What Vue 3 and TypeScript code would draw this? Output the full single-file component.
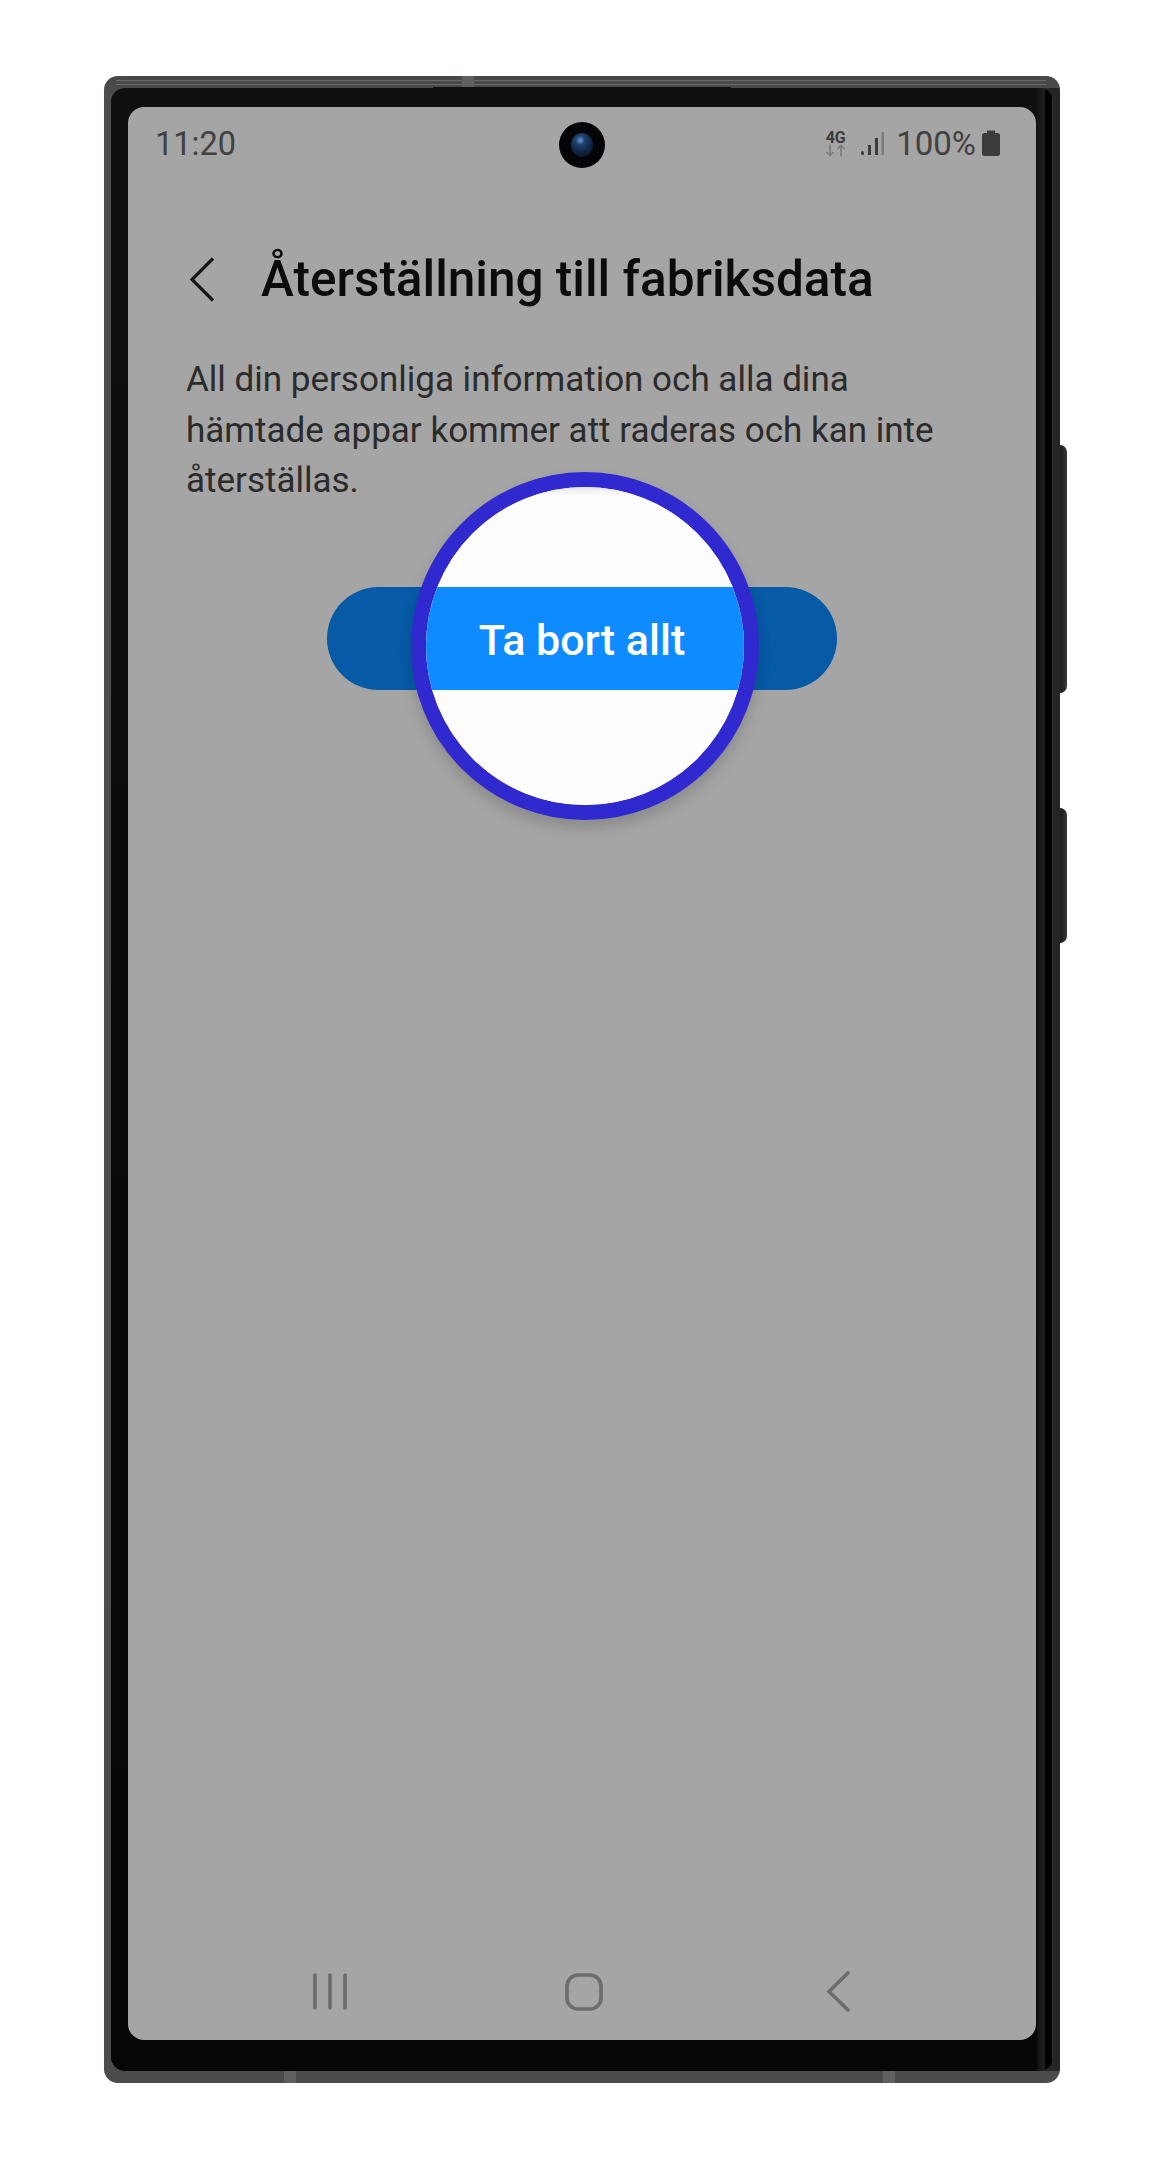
<script setup lang="ts">
const lines: string[] = [
  'All din personliga information och alla dina',
  'hämtade appar kommer att raderas och kan inte',
  'återställas.',
]
</script>

<template>
  <div class="page">
    <div class="device">
      <span class="side-key key-power"></span>
      <span class="side-key key-volume"></span>
      <div class="shell">
        <span class="band-line line-a"></span>
        <span class="band-line line-b"></span>
        <span class="tick tick-top"></span>
        <span class="tick tick-left"></span>
        <span class="tick tick-right"></span>
        <div class="bezel">
          <span class="notch"></span>
          <div class="screen">
            <span class="camera"><span class="lens-glass"></span></span>

            <div class="status">
              <span class="time">11:20</span>
              <div class="status-right">
                <div class="net">
                  <span class="net-label">4G</span>
                  <svg class="net-arrows" width="21" height="13" viewBox="0 0 21 13">
                    <path d="M5 0.5V11.5M1.5 8L5 11.5L8.5 8" />
                    <path d="M16 12.5V1.5M12.5 5L16 1.5L19.5 5" />
                  </svg>
                </div>
                <svg class="signal" width="23" height="24" viewBox="0 0 23 24">
                  <rect x="0" y="19" width="3" height="4" rx="1.5" fill="#3c3c3c" />
                  <rect x="7" y="13" width="3" height="10" fill="#3c3c3c" />
                  <rect x="14" y="6" width="3" height="17" fill="#3c3c3c" />
                  <rect x="20.5" y="0" width="2.5" height="23" fill="#7c7c7c" />
                </svg>
                <span class="percent">100%</span>
                <svg class="battery" width="18" height="26" viewBox="0 0 18 26">
                  <path d="M5 0.5H13V3H15.5Q18 3 18 5.5V23.5Q18 26 15.5 26H2.5Q0 26 0 23.5V5.5Q0 3 2.5 3H5Z" fill="#3c3c3c" />
                </svg>
              </div>
            </div>

            <div class="header">
              <svg class="back" width="25" height="45" viewBox="0 0 25 45">
                <path d="M23 1.5L2 22.5L23 43.5" />
              </svg>
              <h1 class="title">Återställning till fabriksdata</h1>
            </div>

            <div class="body">
              <p v-for="line in lines" :key="line" class="body-line">{{ line }}</p>
            </div>

            <div class="action">
              <div class="pill"></div>
            </div>

            <div class="nav">
              <svg width="36" height="38" viewBox="0 0 36 38" class="nav-icon">
                <path d="M3 2V35M18 2V35M33 2V35" />
              </svg>
              <svg width="38" height="38" viewBox="0 0 38 38" class="nav-icon">
                <rect x="2" y="2" width="34" height="34" rx="11" />
              </svg>
              <svg width="24" height="42" viewBox="0 0 24 42" class="nav-icon">
                <path d="M22 2L3 20.5L22 39" />
              </svg>
            </div>

            <div class="magnifier">
              <div class="mag-white top"></div>
              <div class="mag-band">Ta bort allt</div>
              <div class="mag-white"></div>
            </div>
          </div>
        </div>
      </div>
    </div>
  </div>
</template>

<style>
html, body { margin: 0; background: #ffffff; }
</style>

<style scoped>
.page {
  width: 1170px;
  height: 2160px;
  padding: 76px 0 0 104px;
  box-sizing: border-box;
  background: #ffffff;
  overflow: hidden;
  font-family: Roboto, "Liberation Sans", sans-serif;
}
.device { position: relative; width: 956px; height: 2007px; }
.side-key {
  position: absolute;
  left: 954px;
  width: 9px;
  background: linear-gradient(90deg, #161716 0%, #262826 60%, #3a3c3a 100%);
  border-radius: 0 7px 7px 0;
}
.key-power { top: 369px; height: 248px; }
.key-volume { top: 732px; height: 135px; }
.shell {
  position: relative;
  height: 100%;
  box-sizing: border-box;
  padding: 12px 7px;
  border-radius: 14px;
  background:
    linear-gradient(#484a48, #484a48) top / 100% 12px no-repeat,
    linear-gradient(#4a4c49, #4a4c49) bottom / 100% 12px no-repeat,
    linear-gradient(90deg, #4a4d4a 0%, #4a4d4a 1%, #242624 99%, #242624 100%);
}
.band-line { position: absolute; left: 12px; right: 14px; height: 1px; background: #858785; opacity: .55; }
.line-a { top: 4px; }
.line-b { top: 8px; }
.tick { position: absolute; width: 12px; height: 12px; background: #5e615e; }
.tick-top { top: 0; left: 358px; }
.tick-left { bottom: 0; left: 180px; }
.tick-right { bottom: 0; left: 779px; }
.bezel {
  position: relative;
  height: 100%;
  box-sizing: border-box;
  padding: 19px 17px 31px;
  border-radius: 14px;
  background:
    linear-gradient(90deg, transparent 0, transparent 925px, #161616 928px, #212121 933px, #000 935px, #000 941px, #6a6a6a 942px),
    linear-gradient(180deg, #101010 0%, #060606 100%);
}
.notch {
  position: absolute;
  top: -1px;
  left: 322px;
  width: 298px;
  height: 4px;
  background: #101010;
}
.screen {
  position: relative;
  height: 100%;
  box-sizing: border-box;
  display: flex;
  flex-direction: column;
  border-radius: 16px;
  background: #a5a5a5;
}
.camera {
  position: absolute;
  left: 431px;
  top: 15px;
  width: 46px;
  height: 46px;
  border-radius: 50%;
  background: #040407;
  display: flex;
  align-items: center;
  justify-content: center;
}
.lens-glass {
  width: 22px;
  height: 24px;
  border-radius: 50%;
  background: radial-gradient(circle at 42% 30%, #6d9ad0 0%, #1f426f 22%, #0f2744 55%, #060c18 100%);
}
.status {
  display: flex;
  align-items: center;
  justify-content: space-between;
  height: 50px;
  padding: 12px 36px 0 27px;
  color: #414141;
}
.time { font-size: 32.5px; line-height: 36px; letter-spacing: 0; }
.status-right { display: flex; align-items: center; }
.net { display: flex; flex-direction: column; align-items: center; width: 21px; margin-right: 15px; }
.net-label { font-size: 16px; font-weight: 700; line-height: 13px; color: #3c3c3c; }
.net-arrows { fill: none; stroke: #7c7c7c; stroke-width: 1.6; }
.signal { margin-right: 12px; }
.percent { font-size: 33px; line-height: 36px; margin-right: 6px; }
.battery { margin-top: -2px; }
.header {
  display: flex;
  align-items: center;
  margin-top: 82px;
  padding-left: 62px;
}
.back { fill: none; stroke: #161616; stroke-width: 3.2; }
.title {
  margin: 0 0 0 46px;
  font-size: 49.5px;
  line-height: 56px;
  font-weight: 500;
  color: #0b0b0b;
  white-space: nowrap;
}
.body { margin-top: 48px; padding-left: 58px; }
.body-line {
  margin: 0;
  font-size: 35px;
  line-height: 50.5px;
  color: #2b2b2b;
  white-space: nowrap;
}
.action { margin-top: 80px; padding-left: 199px; }
.pill { width: 510px; height: 103px; border-radius: 52px; background: #065aa6; }
.nav {
  margin-top: auto;
  display: grid;
  grid-template-columns: repeat(3, 254px);
  justify-content: center;
  justify-items: center;
  align-items: center;
  padding: 0 0 27px 4px;
}
.nav-icon { fill: none; stroke: #6c6c6c; stroke-width: 3.6; stroke-linecap: round; }
.magnifier {
  position: absolute;
  left: 283px;
  top: 365px;
  width: 348px;
  height: 348px;
  box-sizing: border-box;
  border: 15px solid #2f29cf;
  border-radius: 50%;
  overflow: hidden;
  display: flex;
  flex-direction: column;
  box-shadow: 0 8px 14px rgba(0, 0, 0, .16);
  background: #fdfdfd;
}
.mag-white { flex: 1; background: #fdfdfd; }
.mag-white.top { flex: none; height: 100px; box-shadow: inset 0 4px 8px -3px rgba(0,0,0,.2); }
.mag-band {
  height: 103px;
  flex: none;
  display: flex;
  align-items: center;
  justify-content: center;
  padding: 3px 6px 0 0;
  box-sizing: border-box;
  background: #0d8bff;
  color: #ffffff;
  font-size: 43px;
  font-weight: 500;
}
</style>
